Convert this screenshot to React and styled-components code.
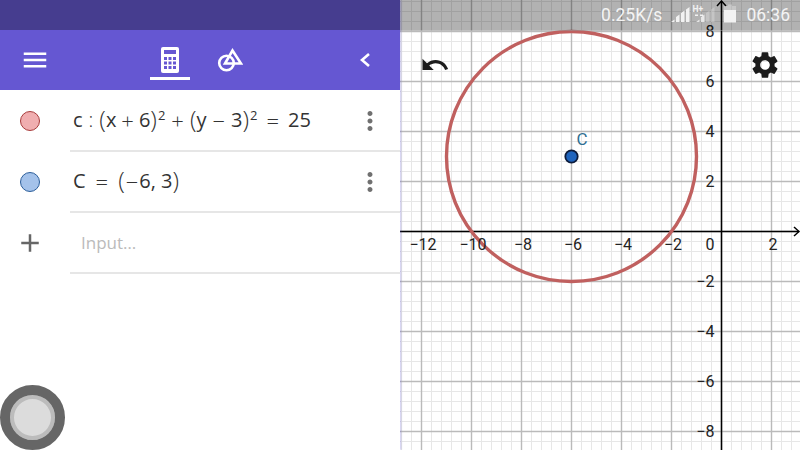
import React from "react";
import styled, { createGlobalStyle } from "styled-components";
import { MdMenu, MdMoreVert, MdAdd, MdUndo, MdSettings } from "react-icons/md";

const GlobalStyle = createGlobalStyle`
  html, body {
    margin: 0;
    padding: 0;
    width: 800px;
    height: 450px;
    overflow: hidden;
    background: #fff;
    font-family: "Open Sans", "Noto Sans", sans-serif;
  }
`;

const Page = styled.div`
  position: relative;
  display: flex;
  width: 800px;
  height: 450px;
  overflow: hidden;
`;

const SidePanel = styled.div`
  width: 400px;
  flex: none;
  display: flex;
  flex-direction: column;
  background: #fff;
  box-shadow: 1px 0 2px rgba(90, 80, 200, 0.35);
  z-index: 1;
`;

const PhoneBar = styled.div`
  height: 30px;
  background: #463d8f;
`;

const Toolbar = styled.div`
  height: 60px;
  display: flex;
  align-items: flex-start;
  padding: 0 28px 0 20px;
  background: #6557d2;
  color: #fff;
  svg {
    display: block;
  }
`;

const MenuButton = styled.div`
  margin-top: 15px;
`;

const Tabs = styled.div`
  display: flex;
  gap: 20px;
  margin-left: 100px;
`;

const Tab = styled.div`
  width: 40px;
  height: 50px;
  box-sizing: border-box;
  display: flex;
  align-items: center;
  justify-content: center;
  padding-top: 13px;
  border-bottom: 3px solid ${(p) => (p.$active ? "#fff" : "transparent")};
`;

const Collapse = styled.div`
  margin-left: auto;
  margin-top: 22px;
`;

const RowList = styled.div`
  padding-top: 1px;
`;

const Row = styled.div`
  display: grid;
  grid-template-columns: 70px 1fr;
  height: 61px;
`;

const Marble = styled.div`
  display: flex;
  align-items: center;
  justify-content: center;
  padding: 0 10px 2px 0;
  color: #666;
`;

const Dot = styled.div`
  width: 18px;
  height: 18px;
  border-radius: 50%;
  background: ${(p) => p.$fill};
  border: 1px solid ${(p) => p.$line};
`;

const RowBody = styled.div`
  display: flex;
  align-items: center;
  justify-content: space-between;
  padding: 0 15px 0 3px;
  border-bottom: 2px solid #e6e6e6;
  color: #707070;
`;

const Formula = styled.div`
  display: flex;
  align-items: center;
  font-size: 20px;
  line-height: 24px;
  color: #333;
  white-space: pre;
  margin-top: -1px;
`;

const Op = styled.span`
  font-size: ${(p) => p.$size || 22}px;
  font-weight: 300;
  margin: 0 ${(p) => p.$gap}px;
`;

const Paren = styled.span`
  font-size: 24px;
  font-weight: 300;
  margin-top: -2px;
`;

const Sup = styled.span`
  font-size: 13px;
  margin: -11px 0 0 1px;
`;

const Placeholder = styled.div`
  font-size: 17px;
  color: #bbb;
  margin-left: 8px;
`;

const GraphPanel = styled.div`
  position: relative;
  flex: 1;
  background: #fff;
  svg {
    display: block;
  }
`;

const StatusBar = styled.div`
  position: absolute;
  top: 0;
  left: 0;
  right: 0;
  height: 31px;
  display: flex;
  align-items: center;
  justify-content: flex-end;
  gap: 9px;
  padding-right: 10px;
  box-sizing: border-box;
  background: rgba(0, 0, 0, 0.3);
  border-bottom: 1px solid rgba(255, 255, 255, 0.3);
  color: #f4f4f4;
  font-family: Roboto, sans-serif;
  font-size: 17.5px;
`;

const GraphButton = styled.div`
  position: absolute;
  top: ${(p) => p.$top}px;
  left: ${(p) => p.$left}px;
  color: #1c1c1c;
`;

const HomeButton = styled.div`
  position: absolute;
  left: 0;
  bottom: 0;
  width: 65px;
  height: 65px;
  box-sizing: border-box;
  border-radius: 50%;
  border: 10px solid #666;
  background: #dcdcdc;
  box-shadow: inset 0 0 0 4px #bcbcbc;
  z-index: 2;
`;

const CalculatorIcon = () => (
  <svg width="18" height="26" viewBox="0 0 18 26">
    <rect width="18" height="26" rx="2" fill="#fff" />
    <rect x="3" y="3" width="12" height="4" fill="#6557d2" />
    {[10, 14.5, 19].map((y) =>
      [3, 7.5, 12].map((x) => <rect key={`${x}-${y}`} x={x} y={y} width="3" height="3" fill="#6557d2" />)
    )}
  </svg>
);

const ShapesIcon = () => (
  <svg width="26" height="26" viewBox="0 0 26 26" fill="none" stroke="#fff" strokeWidth="2.6">
    <circle cx="9.5" cy="16" r="7.3" />
    <path d="M15.5 3.5 L24 16.5 H8 Z" />
  </svg>
);

const ChevronIcon = () => (
  <svg width="14" height="16" viewBox="0 0 14 16" fill="none" stroke="#fff" strokeWidth="2.6">
    <path d="M11 2 L4 8 L11 14" />
  </svg>
);

const SignalIcon = () => (
  <svg width="66" height="24" viewBox="0 0 66 24" fill="#f2f2f2">
    <path d="M0 19 L3.5 16.5 V19 Z M5 19 V14 L8.5 11.5 V19 Z M10 19 V10 L13.5 7.5 V19 Z M15 19 V6.5 L18.5 4 V19 Z" />
    <path d="M25 19 L28.5 16.5 V19 Z M30 19 V14 L33.5 11.5 V19 Z" opacity="0.85" />
    <path d="M35 19 V10 L38.5 7.5 V19 Z M40 19 V6.5 L43.5 4 V19 Z" opacity="0.3" />
    <text x="21.5" y="9" fontSize="8.5" fontFamily="Roboto, sans-serif" fontWeight="700">H+</text>
    <path d="M24 11.5 H27 V13 H24 Z M29 11.5 H32 V13 H29 Z" />
    <path d="M53 3 V7 H65 V3 H61 V1.5 H57 V3 Z" opacity="0.35" />
    <rect x="53" y="7" width="12" height="12.5" />
  </svg>
);

const ORIGIN_X = 321.5;
const ORIGIN_Y = 231.5;
const UNIT = 25;
const MINOR = 10;

const offsets = (low, high) => {
  const out = [];
  for (let k = Math.ceil(low / MINOR); k <= Math.floor(high / MINOR); k++) out.push(k);
  return out;
};

const Graph = () => {
  const xSteps = offsets(-ORIGIN_X, 400 - ORIGIN_X);
  const ySteps = offsets(-ORIGIN_Y, 450 - ORIGIN_Y);
  const isMajor = (k) => k % 5 === 0;
  const px = (v) => ORIGIN_X + v * UNIT;
  const py = (v) => ORIGIN_Y - v * UNIT;
  const labelStyle = { fontFamily: "Roboto, sans-serif", fontSize: 16, fill: "#222" };

  return (
    <svg width="400" height="450" viewBox="0 0 400 450">
      {[false, true].map((major) => (
        <g key={String(major)} stroke={major ? "#bababa" : "#e7e7e7"} strokeWidth={major ? 1.4 : 1}>
          {xSteps.filter((k) => isMajor(k) === major).map((k) => (
            <line key={k} x1={ORIGIN_X + k * MINOR} x2={ORIGIN_X + k * MINOR} y1="0" y2="450" />
          ))}
          {ySteps.filter((k) => isMajor(k) === major).map((k) => (
            <line key={k} x1="0" x2="400" y1={ORIGIN_Y + k * MINOR} y2={ORIGIN_Y + k * MINOR} />
          ))}
        </g>
      ))}
      <g stroke="#000" strokeWidth="1.5" fill="none">
        <line x1="0" x2="399" y1={ORIGIN_Y} y2={ORIGIN_Y} />
        <line x1={px(0)} x2={px(0)} y1="1" y2="450" />
        <path d="M394 227 L399 231.5 L394 236" />
        <path d={`M${px(0) - 4.5} 6 L${px(0)} 1 L${px(0) + 4.5} 6`} />
      </g>
      <circle cx={px(-6)} cy={py(3)} r="125" fill="none" stroke="#c0605f" strokeWidth="3.4" />
      <circle cx={px(-6)} cy={py(3)} r="6.2" fill="#1f64bd" stroke="#0d1c3c" strokeWidth="1.8" />
      <text x={px(-6) + 5} y={py(3) - 12} fontFamily="Roboto, sans-serif" fontSize="17" fill="#2f6f92">C</text>
      {[-12, -10, -8, -6, -4, -2, 2].map((v) => (
        <text key={v} x={px(v) + 1.5} y="250" textAnchor="middle" style={labelStyle}>
          {v < 0 ? `\u2212${-v}` : v}
        </text>
      ))}
      <text x="310" y="250" textAnchor="middle" style={labelStyle}>0</text>
      {[8, 6, 4, 2, -2, -4, -6, -8].map((v) => (
        <text key={v} x={px(0) - 7} y={py(v) + 5.5} textAnchor="end" style={labelStyle}>
          {v < 0 ? `\u2212${-v}` : v}
        </text>
      ))}
    </svg>
  );
};

export default function App() {
  return (
    <Page>
      <GlobalStyle />
      <SidePanel>
        <PhoneBar />
        <Toolbar>
          <MenuButton>
            <MdMenu size={30} />
          </MenuButton>
          <Tabs>
            <Tab $active>
              <CalculatorIcon />
            </Tab>
            <Tab>
              <ShapesIcon />
            </Tab>
          </Tabs>
          <Collapse>
            <ChevronIcon />
          </Collapse>
        </Toolbar>
        <RowList>
          <Row>
            <Marble>
              <Dot $fill="#f0aeb0" $line="#a83c3c" />
            </Marble>
            <RowBody>
              <Formula>
                c<Op $size={20} $gap={6}>:</Op>
                <Paren>(</Paren>x<Op $gap={5}>+</Op>6<Paren>)</Paren>
                <Sup>2</Sup>
                <Op $gap={6}>+</Op>
                <Paren>(</Paren>y<Op $gap={6}>−</Op>3<Paren>)</Paren>
                <Sup>2</Sup>
                <Op $gap={9}>=</Op>25
              </Formula>
              <MdMoreVert size={30} />
            </RowBody>
          </Row>
          <Row>
            <Marble>
              <Dot $fill="#a4c2ea" $line="#2d5f9b" />
            </Marble>
            <RowBody>
              <Formula>
                C<Op $gap={10}>=</Op>
                <Paren>(</Paren>
                <Op $gap={1}>−</Op>6, 3<Paren>)</Paren>
              </Formula>
              <MdMoreVert size={30} />
            </RowBody>
          </Row>
          <Row>
            <Marble>
              <MdAdd size={30} />
            </Marble>
            <RowBody>
              <Placeholder>Input…</Placeholder>
            </RowBody>
          </Row>
        </RowList>
      </SidePanel>
      <GraphPanel>
        <Graph />
        <GraphButton $left={20} $top={50}>
          <MdUndo size={30} />
        </GraphButton>
        <GraphButton $left={349} $top={49}>
          <MdSettings size={32} />
        </GraphButton>
        <StatusBar>
          <span>0.25K/s</span>
          <SignalIcon />
          <span>06:36</span>
        </StatusBar>
      </GraphPanel>
      <HomeButton />
    </Page>
  );
}
